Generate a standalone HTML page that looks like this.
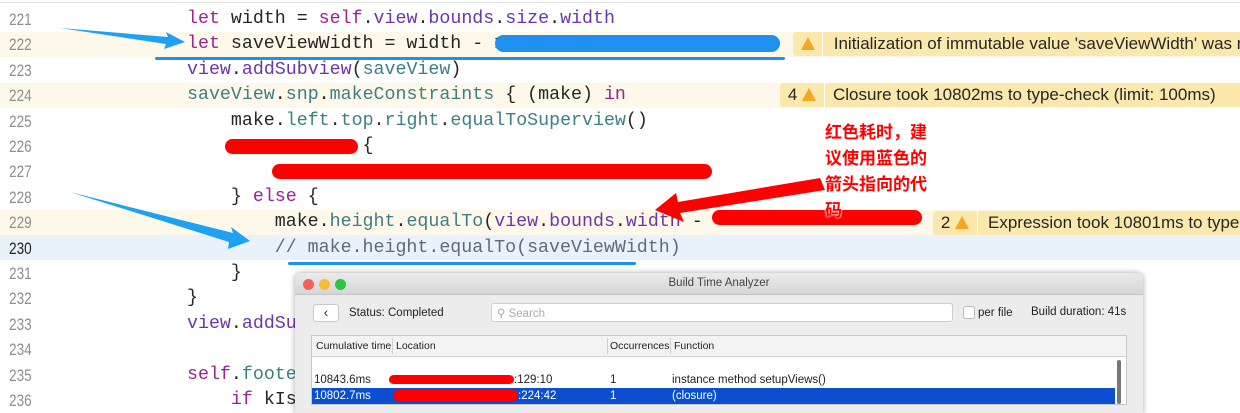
<!DOCTYPE html>
<html><head><meta charset="utf-8"><style>
*{margin:0;padding:0;box-sizing:border-box}
body{width:1240px;height:404px;overflow:hidden;background:#fff;position:relative;font-family:"Liberation Mono",monospace}
.row{position:absolute;left:0;width:1240px;height:25.4px}
.ln{position:absolute;left:9px;font-family:"Liberation Sans",sans-serif;font-size:17px;color:#8e8e8e;line-height:25.4px;transform:scaleX(.8);transform-origin:left}
.code{position:absolute;left:187px;font-size:18.3px;line-height:25.4px;color:#262626;white-space:pre}
.k{color:#9b2393}.p{color:#6c36a9}.t{color:#3e7f86}.c{color:#5d6c79}
.warn{position:absolute;height:24px;background:#fbe8ac;font-family:"Liberation Sans",sans-serif;font-size:17px;line-height:24px;color:#262626;white-space:nowrap;border-radius:3px}
.tri{display:inline-block;width:0;height:0;border-left:7px solid transparent;border-right:7px solid transparent;border-bottom:13px solid #f5a623;vertical-align:-1px}
.red{position:absolute;background:#f00;border-radius:8px;height:14px}
.ui{font-family:"Liberation Sans",sans-serif;font-size:11.5px;color:#222;position:absolute;white-space:nowrap}
</style></head><body>
<div style="position:absolute;left:0;top:2px;width:1240px;height:1px;background:#e4e4e4"></div>
<div class="row" style="top:31.7px;background:#fdf8e9"></div>
<div class="row" style="top:82.5px;background:#fdf8e9"></div>
<div class="row" style="top:209.5px;background:#fdf8e9"></div>
<div class="row" style="top:234.9px;background:#e9f1fb"></div>

<div style="position:absolute;top:7px;left:0">
<div class="row" style="top:0"><div class="ln">221</div><div class="code"><span class="k">let</span> width = <span class="k">self</span>.<span class="p">view</span>.<span class="p">bounds</span>.<span class="p">size</span>.<span class="p">width</span></div></div>
<div class="row" style="top:25.4px"><div class="ln">222</div><div class="code"><span class="k">let</span> saveViewWidth = width - 1</div></div>
<div class="row" style="top:50.8px"><div class="ln">223</div><div class="code"><span class="p">view</span>.<span class="p">addSubview</span>(<span class="t">saveView</span>)</div></div>
<div class="row" style="top:76.2px"><div class="ln">224</div><div class="code"><span class="t">saveView</span>.<span class="t">snp</span>.<span class="t">makeConstraints</span> { (make) <span class="k">in</span></div></div>
<div class="row" style="top:101.6px"><div class="ln">225</div><div class="code">    make.<span class="t">left</span>.<span class="t">top</span>.<span class="t">right</span>.<span class="t">equalToSuperview</span>()</div></div>
<div class="row" style="top:127px"><div class="ln">226</div><div class="code">                {</div></div>
<div class="row" style="top:152.4px"><div class="ln">227</div><div class="code">        </div></div>
<div class="row" style="top:177.8px"><div class="ln">228</div><div class="code">    } <span class="k">else</span> {</div></div>
<div class="row" style="top:203.2px"><div class="ln">229</div><div class="code">        make.<span class="t">height</span>.<span class="t">equalTo</span>(<span class="p">view</span>.<span class="p">bounds</span>.<span class="p">width</span> - </div></div>
<div class="row" style="top:228.6px"><div class="ln" style="color:#222">230</div><div class="code c">        // make.height.equalTo(saveViewWidth)</div></div>
<div class="row" style="top:254px"><div class="ln">231</div><div class="code">    }</div></div>
<div class="row" style="top:279.4px"><div class="ln">232</div><div class="code">}</div></div>
<div class="row" style="top:304.8px"><div class="ln">233</div><div class="code"><span class="p">view</span>.<span class="p">addSubview</span></div></div>
<div class="row" style="top:330.2px"><div class="ln">234</div></div>
<div class="row" style="top:355.6px"><div class="ln">235</div><div class="code"><span class="k">self</span>.<span class="t">footer</span></div></div>
<div class="row" style="top:381px"><div class="ln">236</div><div class="code">    <span class="k">if</span> kIs</div></div>
</div>

<div style="position:absolute;left:495px;top:35px;width:285px;height:17px;background:#1e90f0;border-radius:9px"></div>
<div style="position:absolute;left:155px;top:57px;width:630px;height:3px;background:#1e90f0;border-radius:2px"></div>
<div style="position:absolute;left:288px;top:262px;width:348px;height:3px;background:#1e90f0;border-radius:2px"></div>
<svg style="position:absolute;left:0;top:0" width="1240" height="404">
<polygon points="60,28 168,37 166,32 185,42 164,49 166,44" fill="#1da1f2"/>
<polygon points="70,192 233,233 231,227 250,241 228,249 229,242" fill="#1da1f2"/>
<polygon points="820,178 825,190 680,213 684,222 655,210 676,193 678,202" fill="#f00"/>
</svg>

<div class="red" style="left:225px;top:139px;width:133px;height:15px"></div>
<div class="red" style="left:272px;top:164px;width:440px;height:15px"></div>
<div class="red" style="left:712px;top:210px;width:210px;height:15px"></div>

<div style="position:absolute;left:825px;top:118px;width:150px;font-family:'Noto Sans CJK SC',sans-serif;font-size:17px;font-weight:bold;line-height:26px;color:#f00;text-shadow:0 0 2px #fff,0 0 2px #fff">红色耗时，建<br>议使用蓝色的<br>箭头指向的代<br>码</div>

<div class="warn" style="left:793px;top:32px;width:460px"><span style="display:inline-block;width:30px;text-align:center;border-right:1px solid #fff"><span class="tri"></span></span> <span style="padding-left:6px">Initialization of immutable value 'saveViewWidth' was n</span></div>
<div class="warn" style="left:780px;top:83px;width:470px"><span style="display:inline-block;width:45px;text-align:center;border-right:1px solid #fff">4 <span class="tri"></span></span><span style="padding-left:8px">Closure took 10802ms to type-check (limit: 100ms)</span></div>
<div class="warn" style="left:933px;top:211px;width:310px"><span style="display:inline-block;width:45px;text-align:center;border-right:1px solid #fff">2 <span class="tri"></span></span><span style="padding-left:10px">Expression took 10801ms to type</span></div>

<div style="position:absolute;left:295px;top:273px;width:848px;height:140px;background:#ececec;border-radius:6px 6px 0 0;box-shadow:0 0 6px rgba(0,0,0,.35);overflow:hidden">
 <div style="height:22px;background:linear-gradient(#ebebeb,#d6d6d6);border-bottom:1px solid #c4c4c4;position:relative">
  <div style="position:absolute;left:8px;top:6px;width:11px;height:11px;border-radius:50%;background:#fc5f57"></div>
  <div style="position:absolute;left:24px;top:6px;width:11px;height:11px;border-radius:50%;background:#fdbc2e"></div>
  <div style="position:absolute;left:40px;top:6px;width:11px;height:11px;border-radius:50%;background:#28c840"></div>
  <div class="ui" style="left:0;width:848px;text-align:center;top:4px;font-size:11.5px;color:#444">Build Time Analyzer</div>
 </div>
</div>
<div style="position:absolute;left:313px;top:304px;width:26px;height:18px;background:#fff;border:1px solid #c8c8c8;border-radius:3px;font-family:'Liberation Sans';font-size:14px;line-height:15px;text-align:center;color:#333">‹</div>
<div class="ui" style="left:349px;top:307px">Status: Completed</div>
<div style="position:absolute;left:491px;top:303px;width:462px;height:19px;background:#fff;border:1px solid #cfcfcf;border-radius:3px"></div>
<div class="ui" style="left:497px;top:306px;color:#aaa">⚲ Search</div>
<div style="position:absolute;left:963px;top:306px;width:12px;height:13px;background:#fff;border:1px solid #bbb;border-radius:3px"></div>
<div class="ui" style="left:978px;top:307px">per file</div>
<div class="ui" style="left:1031px;top:306px">Build duration: 41s</div>
<div style="position:absolute;left:311px;top:335px;width:816px;height:70px;border:1px solid #c8c8c8;background:#fff"></div>
<div style="position:absolute;left:312px;top:336px;width:814px;height:21px;background:#f3f3f3;border-bottom:1px solid #d4d4d4"></div>
<div style="position:absolute;left:392px;top:338px;width:1px;height:16px;background:#d0d0d0"></div>
<div style="position:absolute;left:607px;top:338px;width:1px;height:16px;background:#d0d0d0"></div>
<div style="position:absolute;left:670px;top:338px;width:1px;height:16px;background:#d0d0d0"></div>
<div class="ui" style="left:316px;top:340px;font-size:10.5px">Cumulative time</div>
<div class="ui" style="left:396px;top:340px;font-size:10.5px">Location</div>
<div class="ui" style="left:610px;top:340px;font-size:10.5px">Occurrences</div>
<div class="ui" style="left:674px;top:340px;font-size:10.5px">Function</div>
<div style="position:absolute;left:1117px;top:360px;width:4px;height:44px;background:#777;border-radius:2px"></div>
<div class="ui" style="left:314px;top:374px">10843.6ms</div>
<div class="red" style="left:389px;top:375px;width:125px;height:9px"></div>
<div class="ui" style="left:514px;top:374px">:129:10</div>
<div class="ui" style="left:610px;top:374px">1</div>
<div class="ui" style="left:672px;top:374px">instance method setupViews()</div>
<div style="position:absolute;left:312px;top:388px;width:803px;height:16px;background:#0b4fd0"></div>
<div class="ui" style="left:314px;top:390px;color:#fff">10802.7ms</div>
<div class="red" style="left:393px;top:390px;width:125px;height:11px"></div>
<div class="ui" style="left:518px;top:390px;color:#fff">:224:42</div>
<div class="ui" style="left:610px;top:390px;color:#fff">1</div>
<div class="ui" style="left:672px;top:390px;color:#fff">(closure)</div>
</body></html>
